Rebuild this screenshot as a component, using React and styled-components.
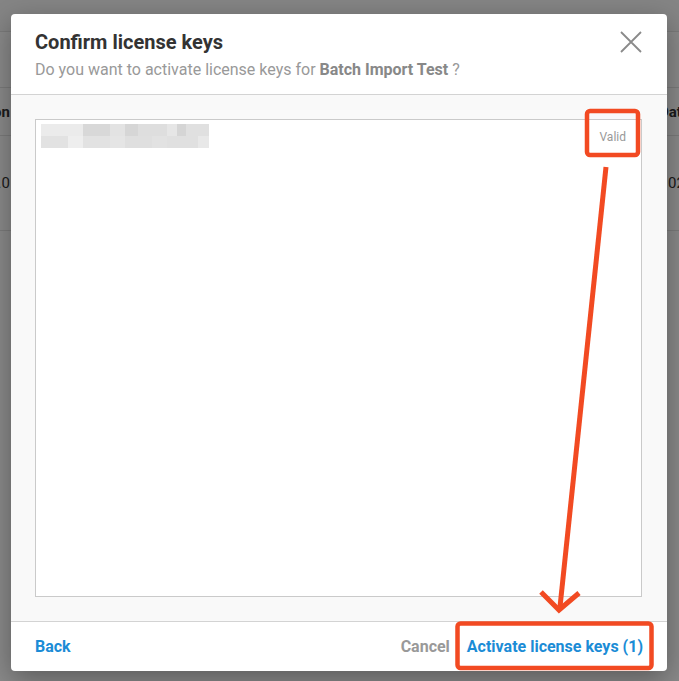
import React from 'react';
import styled, { createGlobalStyle } from 'styled-components';

const GlobalStyle = createGlobalStyle`
    html, body {
        margin: 0;
        padding: 0;
        background: #ffffff;
        font-family: Roboto, "Liberation Sans", Arial, sans-serif;
    }
    #root {
        width: 679px;
        height: 681px;
        position: relative;
        overflow: hidden;
    }
`;

// the page behind the dialog
const Page = styled.div`
    width: 679px;
    height: 681px;
    background: #fff;
`;

const TopBar = styled.div`
    height: 31px;
    border-bottom: 1px solid #e4e4e4;
    background: #f6f6f6;
`;

const Spacer = styled.div`
    height: 55px;
`;

const TableRow = styled.div`
    display: flex;
    justify-content: space-between;
    align-items: center;
    height: ${({ tall }) => (tall ? '94px' : '47px')};
    border-top: ${({ first }) => (first ? '1px solid #e4e4e4' : 'none')};
    border-bottom: 1px solid #e4e4e4;
    font-size: 15px;
    font-weight: ${({ head }) => (head ? 700 : 400)};
    color: #333;
`;

const LeftCell = styled.div`
    width: 10px;
    display: flex;
    justify-content: flex-end;
    white-space: nowrap;
`;

const RightCell = styled.div`
    width: ${({ w }) => w}px;
    white-space: nowrap;
`;

const Backdrop = styled.div`
    position: absolute;
    inset: 0;
    background: rgba(0, 0, 0, 0.46);
`;

const Modal = styled.div`
    position: absolute;
    left: 11px;
    top: 14px;
    width: 656px;
    height: 657px;
    background: #fff;
    border-radius: 4px;
    box-shadow: 0 8px 28px rgba(0, 0, 0, 0.35);
    display: flex;
    flex-direction: column;
    overflow: hidden;
`;

const Header = styled.div`
    position: relative;
    padding: 16px 24px 14px;
    border-bottom: 1px solid #d3d3d3;
    display: flex;
    flex-direction: column;
    gap: 6px;
`;

const Title = styled.h2`
    margin: 0;
    font-size: 20px;
    line-height: 24px;
    font-weight: 700;
    color: #333;
`;

const Subtitle = styled.p`
    margin: 0;
    font-size: 16px;
    line-height: 20px;
    color: #999;

    b {
        color: #888;
        font-weight: 700;
    }
`;

const CloseButton = styled.button`
    position: absolute;
    top: 16px;
    right: 24px;
    width: 24px;
    height: 24px;
    padding: 0;
    border: none;
    background: none;
    display: flex;
    align-items: center;
    justify-content: center;
`;

const Body = styled.div`
    flex: 1;
    background: #f9f9f9;
    padding: 24px 25px 24px 24px;
    display: flex;
`;

const KeyBox = styled.div`
    flex: 1;
    background: #fff;
    border: 1px solid #cacaca;
    padding: 4px 15px 0 5px;
    display: flex;
    justify-content: space-between;
    align-items: flex-start;
`;

const Status = styled.span`
    margin-top: 5px;
    font-size: 12px;
    line-height: 16px;
    color: #999;
`;

const Footer = styled.div`
    height: 48px;
    border-top: 1px solid #d3d3d3;
    padding: 1px 24px 0;
    display: flex;
    justify-content: space-between;
    align-items: center;
`;

const Actions = styled.div`
    display: flex;
    align-items: center;
    gap: 17px;
`;

const TextButton = styled.button`
    padding: 0;
    border: none;
    background: none;
    font-family: inherit;
    font-size: 16px;
    font-weight: 700;
    line-height: 20px;
    color: ${({ muted }) => (muted ? '#999' : '#1b8cd6')};
`;

const Markup = styled.svg`
    position: absolute;
    top: 0;
    left: 0;
    pointer-events: none;
`;

const blurRows = [
    [
        [0, 42, '#ebebeb'], [42, 27, '#d8d8d8'], [69, 15, '#e3e3e3'], [84, 13, '#d6d6d6'],
        [97, 29, '#dedede'], [126, 10, '#e6e6e6'], [136, 9, '#d5d5d5'], [145, 23, '#e0e0e0'],
    ],
    [
        [0, 27, '#e2e2e2'], [27, 15, '#eeeeee'], [42, 27, '#e2e2e2'], [69, 15, '#e5e5e5'],
        [84, 27, '#dfdfdf'], [111, 15, '#e2e2e2'], [126, 31, '#e0e0e0'], [157, 11, '#e8e8e8'],
    ],
];

const BlurredKey = () => (
    <svg width="168" height="24" viewBox="0 0 168 24">
        {blurRows.map((row, r) =>
            row.map(([x, w, c]) => <rect key={`${r}-${x}`} x={x} y={r * 12} width={w} height={12} fill={c} />)
        )}
    </svg>
);

const App = () => {
    return (
        <>
            <GlobalStyle />
            <Page>
                <TopBar />
                <Spacer />
                <TableRow head first>
                    <LeftCell>Version</LeftCell>
                    <RightCell w={20}>Date</RightCell>
                </TableRow>
                <TableRow tall>
                    <LeftCell>1.0</LeftCell>
                    <RightCell w={11}>02/14/2023</RightCell>
                </TableRow>
            </Page>
            <Backdrop />
            <Modal>
                <Header>
                    <Title>Confirm license keys</Title>
                    <Subtitle>
                        Do you want to activate license keys for <b>Batch Import Test</b> ?
                    </Subtitle>
                    <CloseButton aria-label="Close">
                        <svg width="22" height="22" viewBox="0 0 22 22">
                            <path d="M1 1 L21 21 M21 1 L1 21" stroke="#8a8a8a" strokeWidth="1.8" />
                        </svg>
                    </CloseButton>
                </Header>
                <Body>
                    <KeyBox>
                        <BlurredKey />
                        <Status>Valid</Status>
                    </KeyBox>
                </Body>
                <Footer>
                    <TextButton>Back</TextButton>
                    <Actions>
                        <TextButton muted>Cancel</TextButton>
                        <TextButton>Activate license keys (1)</TextButton>
                    </Actions>
                </Footer>
            </Modal>
            <Markup width="679" height="681" viewBox="0 0 679 681">
                <rect x="587" y="111" width="51" height="44" rx="3" fill="none" stroke="#f24a22" strokeWidth="4.5" />
                <rect x="457.5" y="623.5" width="194" height="44.5" rx="3" fill="none" stroke="#f24a22" strokeWidth="4.5" />
                <line x1="606" y1="167" x2="560" y2="607" stroke="#f24a22" strokeWidth="5" />
                <polyline points="541,592 559,610 579,593" fill="none" stroke="#f24a22" strokeWidth="5" />
            </Markup>
        </>
    );
};

export default App;
